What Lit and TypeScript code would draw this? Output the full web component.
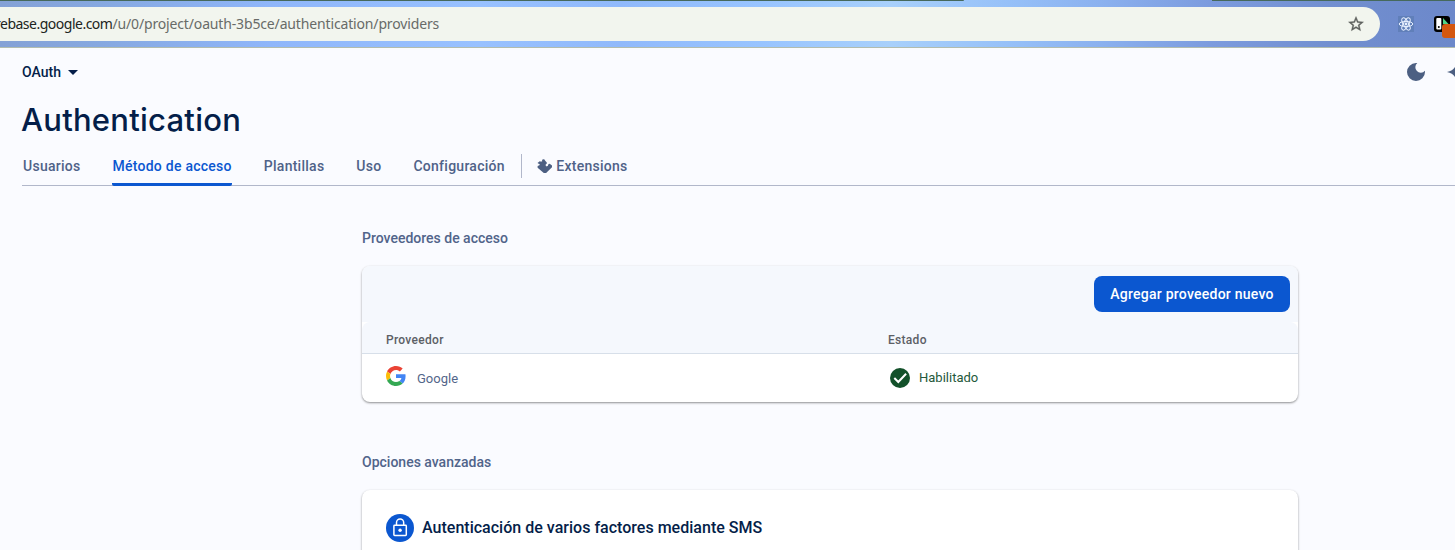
import { LitElement, html, css } from "lit";
import { customElement } from "lit/decorators.js";

@customElement("browser-bar")
class BrowserBar extends LitElement {
  static styles = css`
    :host { display: block; height: 48px; box-sizing: border-box; overflow: hidden;
      border-bottom: 1px solid #b2bcae;
      background: linear-gradient(90deg, #84a1d6 0, #86a8e0 100px, #8fb6fa 270px, #98c1ff 480px, #90b9fb 620px, #98c4ff 760px, #a8d0fb 890px, #96c0f8 1010px, #8bb1ef 1100px, #7c9bde 1210px, #728fd0 1330px, #6c88ca 1455px); }
    .edge { display: flex; justify-content: space-between; height: 1px; }
    .left { width: 964px; background: #46695c; border-radius: 0 1px 0 0; }
    .right { width: 243px; background: #46695c; }
    .row { display: flex; align-items: center; height: 34px; margin-top: 6px; }
    .address { box-sizing: border-box; flex: none; width: 1380px; height: 34px; border-radius: 0 17px 17px 0; background: #f2f5ee;
      display: flex; align-items: center; justify-content: space-between; padding-right: 15px;
      font: 14px/34px "Noto Sans", "Open Sans", sans-serif; color: #686b68; }
    .url { white-space: nowrap; letter-spacing: -0.15px; margin-left: -5px; }
    .host { color: #202420; letter-spacing: -0.5px; }
    svg { display: block; flex: none; }
    .react { margin-left: 18px; }
    .ext { margin-left: 20px; }
  `;
  render() {
    return html`
      <div class="edge"><div class="left"></div><div class="right"></div></div>
      <div class="row">
        <div class="address">
          <span class="url"><span class="host">rebase.google.com</span>/u/0/project/oauth-3b5ce/authentication/providers</span>
          <svg width="18" height="18" viewBox="0 0 24 24" fill="#5d605d" stroke="#5d605d" stroke-width=".5"><path d="M22 9.240l-7.190-.62L12 2 9.190 8.630 2 9.240l5.460 4.730L5.820 21 12 17.270 18.180 21l-1.630-7.030L22 9.240zM12 15.400l-3.760 2.270 1-4.280-3.320-2.880 4.380-.38L12 6.100l1.710 4.040 4.380.38-3.320 2.880 1 4.280L12 15.400z"/></svg>
        </div>
        <svg class="react" width="16" height="16" viewBox="0 0 16 16"><rect width="16" height="16" fill="#607fb9"/><g fill="none" stroke="#e9f1ff" stroke-width="1">
          <ellipse cx="8" cy="8" rx="6.800" ry="2.600"/><ellipse cx="8" cy="8" rx="6.800" ry="2.600" transform="rotate(60 8 8)"/><ellipse cx="8" cy="8" rx="6.800" ry="2.600" transform="rotate(120 8 8)"/></g><circle cx="8" cy="8" r="1.400" fill="#e9f1ff"/></svg>
        <svg class="ext" width="22" height="28" viewBox="0 0 22 28"><rect y="6" width="16" height="16" rx="3" fill="#000"/><rect x="2.300" y="8" width="5" height="11.500" rx="1" fill="#fff"/><circle cx="4.800" cy="17" r="1" fill="#000"/><path d="M9 8l5.500 6H9z" fill="#4ed486"/><rect x="8" y="14" width="15" height="14" rx="3" fill="#d4570f"/></svg>
      </div>`;
  }
}

@customElement("product-header")
class ProductHeader extends LitElement {
  static styles = css`
    :host { display: block; padding-left: 22px; height: 138px; overflow: hidden; font-family: Roboto, sans-serif; }
    .top { display: flex; height: 48px; align-items: center; justify-content: space-between; }
    .project { display: flex; align-items: center; gap: 7px; font-size: 14px; font-weight: 500; color: #041e49; }
    .actions { display: flex; align-items: center; gap: 19px; }
    svg { display: block; flex: none; }
    h1 { margin: 0 0 0 -1px; font: 500 31px/47px "Google Sans", Inter, Roboto, sans-serif; letter-spacing: .25px; color: #041e49; height: 51px; }
    nav { display: flex; height: 38px; border-bottom: 1px solid #b1b7ca; font-size: 14px; font-weight: 500; letter-spacing: .26px; color: #4f6288; white-space: nowrap; }
    .tab { box-sizing: border-box; height: 39px; line-height: 38px; margin-right: 32px; }
    .tab.first { margin-left: 1px; }
    .tab.active { color: #0b57d0; border-bottom: 3px solid #0b57d0; border-radius: 2px; }
    .tab.last { margin-right: 16px; }
    .divider { width: 1px; height: 24px; margin: 7px 15.5px 0 0; background: #b1b7ca; }
    .ext { display: flex; align-items: center; gap: 4px; height: 38px; }
  `;
  render() {
    return html`
      <div class="top">
        <div class="project">OAuth <svg width="10" height="5"><path d="M0 0h10L5 5z" fill="#041e49"/></svg></div>
        <div class="actions">
          <svg width="22" height="22" viewBox="0 0 22 22"><path d="M11 2a9 9 0 1 0 9 9c0-.5 0-.9-.1-1.300A5.400 5.400 0 1 1 12.300 2.100Q11.600 2 11 2z" fill="#4c5f82"/></svg>
          <svg width="9" height="22" viewBox="0 0 9 22"><path d="M1 11Q9.200 9.500 10.500 2v18Q9.200 12.500 1 11z" fill="#4c5f82"/></svg>
        </div>
      </div>
      <h1>Authentication</h1>
      <nav>
        <div class="tab first">Usuarios</div>
        <div class="tab active">Método de acceso</div>
        <div class="tab">Plantillas</div>
        <div class="tab">Uso</div>
        <div class="tab last">Configuración</div>
        <div class="divider"></div>
        <div class="ext"><svg width="15" height="14" viewBox="0 0 15 14"><path d="M.5 4L2.700 2.200Q4.300 3 5.200 2.200 4.500.8 6 .2 7.900.1 8 1.600L9.800 3.500Q10.200 5 8.800 5.300 8 6.900 9.700 7.400 11.300 7.300 11.300 5.500 11.800 4.300 13 4.900L15 6.500V8.200L9.100 14H6.800L.6 8.700V7Q3.200 6.500 2.700 5.100 1.700 5 .5 4z" fill="#4c5f82"/></svg>Extensions</div>
      </nav>`;
  }
}

@customElement("provider-card")
class ProviderCard extends LitElement {
  static styles = css`
    :host { display: block; height: 136px; border-radius: 8px; overflow: hidden; background: #fff; font-family: Roboto, sans-serif;
      box-shadow: 0 1px 2px rgba(0,0,0,.32), 0 1px 3px rgba(0,0,0,.14); }
    .toolbar { display: flex; justify-content: flex-end; height: 56px; box-sizing: border-box; padding: 10px 8px 0 0; background: #f5f8fd; }
    button { width: 196px; height: 36px; padding: 0; border: 0; border-radius: 8px; background: #0b57d0; color: #fff; font: 500 14px Roboto, sans-serif; letter-spacing: .25px; white-space: nowrap; }
    .line { display: grid; grid-template-columns: 502px 1fr; padding-left: 24px; align-items: center; }
    .head { height: 31px; border-bottom: 1px solid #d7dfe9; border-radius: 8px 8px 0 0; background: #f5f8fd; color: #5c6066; font-size: 12px; font-weight: 500; letter-spacing: .3px; }
    .head span { padding-top: 4px; }
    .body { height: 48px; font-size: 13px; }
    .name { display: flex; align-items: center; gap: 11px; color: #53668a; }
    .name span { padding-top: 1px; }
    .name svg { margin-top: -4px; }
    .status { display: flex; align-items: center; gap: 9px; margin-left: 2px; color: #24583a; }
    .status span { padding-bottom: 2px; }
    svg { display: block; flex: none; }
  `;
  render() {
    return html`
      <div class="toolbar"><button>Agregar proveedor nuevo</button></div>
      <div class="line head"><span>Proveedor</span><span>Estado</span></div>
      <div class="line body">
        <div class="name"><svg width="20" height="20" viewBox="0 0 48 48">
          <path fill="#EA4335" d="M24 9.500c3.540 0 6.710 1.220 9.210 3.600l6.850-6.850C35.900 2.380 30.470 0 24 0 14.620 0 6.510 5.380 2.560 13.220l7.980 6.190C12.430 13.720 17.740 9.500 24 9.500z"/>
          <path fill="#4285F4" d="M46.980 24.550c0-1.570-.15-3.090-.38-4.550H24v9.020h12.940c-.58 2.960-2.260 5.480-4.780 7.180l7.730 6c4.510-4.180 7.090-10.360 7.090-17.650z"/>
          <path fill="#FBBC05" d="M10.530 28.590A14.500 14.500 0 0 1 9.770 24c0-1.600.27-3.140.76-4.590l-7.980-6.190A24 24 0 0 0 0 24c0 3.880.92 7.540 2.560 10.780l7.970-6.190z"/>
          <path fill="#34A853" d="M24 48c6.480 0 11.930-2.130 15.890-5.810l-7.730-6c-2.150 1.450-4.920 2.300-8.160 2.300-6.260 0-11.570-4.220-13.470-9.910l-7.980 6.190C6.510 42.620 14.620 48 24 48z"/></svg><span>Google</span></div>
        <div class="status"><svg width="20" height="20"><circle cx="10" cy="10" r="10" fill="#13512a"/><path d="M4.300 10l4 4 7.800-8.200" fill="none" stroke="#fff" stroke-width="2"/></svg><span>Habilitado</span></div>
      </div>`;
  }
}

@customElement("app-root")
class AppRoot extends LitElement {
  static styles = css`
    :host { display: block; height: 550px; overflow: hidden; background: #fafbff; font-family: Roboto, sans-serif; }
    main { width: 936px; margin-left: 362px; }
    h2 { margin: 0; font-size: 14px; line-height: 20px; font-weight: 500; color: #51648a; }
    .providers { padding-top: 42px; }
    .advanced { padding-top: 50px; }
    provider-card, .card { margin-top: 18px; }
    .card { display: flex; gap: 8px; height: 100px; padding: 24px 24px 0; box-sizing: border-box; border-radius: 8px; background: #fff; box-shadow: 0 1px 2px rgba(0,0,0,.32), 0 1px 3px rgba(0,0,0,.14); }
    h3 { margin: 0; font-size: 16px; line-height: 27px; font-weight: 500; letter-spacing: .015px; color: #041e49; }
    svg { display: block; }
  `;
  render() {
    return html`
      <browser-bar></browser-bar>
      <product-header></product-header>
      <main>
        <h2 class="providers">Proveedores de acceso</h2>
        <provider-card></provider-card>
        <h2 class="advanced">Opciones avanzadas</h2>
        <div class="card">
          <svg width="28" height="28"><circle cx="14" cy="14" r="14" fill="#0b57d0"/><g fill="none" stroke="#fff" stroke-width="1.500"><rect x="7.900" y="11.200" width="12.400" height="10.200" rx=".7"/><path d="M10.500 11V8.700a3.600 3.600 0 0 1 7.200 0V11"/></g><circle cx="14.100" cy="16.300" r="1.700" fill="#fff"/></svg>
          <h3>Autenticación de varios factores mediante SMS</h3>
        </div>
      </main>`;
  }
}
